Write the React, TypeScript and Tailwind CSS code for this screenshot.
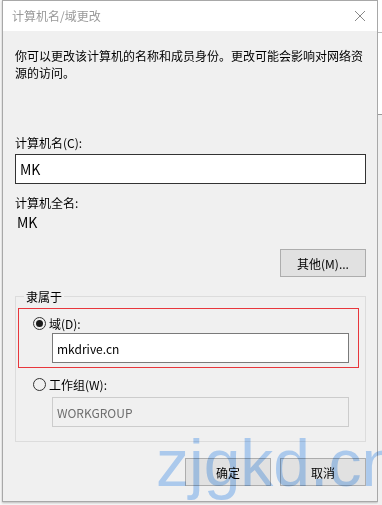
import React from 'react';

const font = { fontFamily: '"Noto Sans CJK SC", "Noto Sans", sans-serif' };

function Radio({ checked }: { checked?: boolean }) {
  return (
    <span className="flex h-[13px] w-[13px] shrink-0 items-center justify-center rounded-full border border-[#333] bg-[#f0f0f0]">
      {checked && <span className="h-[7px] w-[7px] rounded-full bg-[#1a1a1a]" />}
    </span>
  );
}

function Field({ value, disabled }: { value: string; disabled?: boolean }) {
  return (
    <div
      className={
        'flex h-[30px] items-center px-[4px] text-[12px] ' +
        (disabled
          ? 'border border-[#cccccc] bg-[#f0f0f0] text-[#6d6d6d]'
          : 'border border-[#7a7a7a] bg-white text-[#000]')
      }
    >
      {value}
    </div>
  );
}

function DlgButton({ children }: { children: React.ReactNode }) {
  return (
    <button className="flex h-[28px] w-[86px] items-center justify-center border border-[#adadad] bg-[#e1e1e1] text-[12px] text-black">
      {children}
    </button>
  );
}

export default function App() {
  return (
    <div className="relative flex h-[505px] w-[382px] overflow-hidden bg-[#f7f7f7]" style={font}>
      <div className="ml-[2px] flex h-[502px] w-[376px] flex-col border border-[#a8a8a8] bg-[#f0f0f0] shadow-[0_1px_2px_rgba(0,0,0,0.25)]">
        {/* title bar */}
        <div className="flex h-[30px] shrink-0 items-center justify-between bg-white pl-[9px] pr-[9px]">
          <span className="text-[12px] text-[#999]">计算机名/域更改</span>
          <svg width="12" height="12" viewBox="0 0 12 12" className="mr-[2px]">
            <path d="M1 1 L11 11 M11 1 L1 11" stroke="#888" strokeWidth="1" fill="none" />
          </svg>
        </div>

        <div className="flex flex-col pl-[12px] pr-[11px] text-[12px] leading-[17px] text-black">
          <p className="mt-[16px] w-[352px]">
            你可以更改该计算机的名称和成员身份。更改可能会影响对网络资源的访问。
          </p>

          <div className="mt-[53px]">计算机名(C):</div>
          <div className="mt-[3px] flex h-[30px] items-center border border-[#333] bg-white px-[4px] text-[14px]">
            MK
          </div>

          <div className="mt-[10px]">计算机全名:</div>
          <div className="mt-[3px] pl-[2px] text-[14px]">MK</div>

          <div className="mt-[18px] flex justify-end">
            <button className="flex h-[28px] w-[86px] items-center justify-center border border-[#adadad] bg-[#e1e1e1] text-[12px] text-black">
              其他(M)...
            </button>
          </div>

          <fieldset className="mt-[11px] h-[154px] border border-[#dcdcdc] px-[2px]">
            <legend className="ml-[6px] px-[2px] text-[12px] leading-[17px]">隶属于</legend>
            <div className="mr-[4px] mt-[3px] flex h-[60px] flex-col border border-[#e8363c] pl-[14px] pr-[9px]">
              <div className="mt-[6px] flex items-center gap-[3px]">
                <Radio checked />
                <span>域(D):</span>
              </div>
              <div className="ml-[19px] mt-[1px]">
                <Field value="mkdrive.cn" />
              </div>
            </div>
            <div className="mr-[4px] mt-[8px] flex flex-col pl-[15px] pr-[10px]">
              <div className="flex items-center gap-[3px]">
                <Radio />
                <span>工作组(W):</span>
              </div>
              <div className="ml-[19px] mt-[4px]">
                <Field value="WORKGROUP" disabled />
              </div>
            </div>
          </fieldset>

          <div className="mt-[16px] flex justify-end gap-[9px]">
            <DlgButton>确定</DlgButton>
            <DlgButton>取消</DlgButton>
          </div>
        </div>
      </div>

      {/* background window peeking on the right */}
      <div className="flex w-[4px] flex-col">
        <div className="h-[33px] border-b border-[#bbb] bg-white" />
        <div className="h-[82px] border-b border-[#999] bg-white" />
        <div className="flex-1 bg-[#f0f0f0]" />
      </div>

      {/* watermark */}
      <div
        className="pointer-events-none absolute left-[156px] top-[430px] text-[66px] leading-none text-[#b6d6fb] mix-blend-multiply"
        style={{ fontFamily: '"Liberation Sans", Arial, sans-serif' }}
      >
        zjgkd.cn
      </div>
    </div>
  );
}
